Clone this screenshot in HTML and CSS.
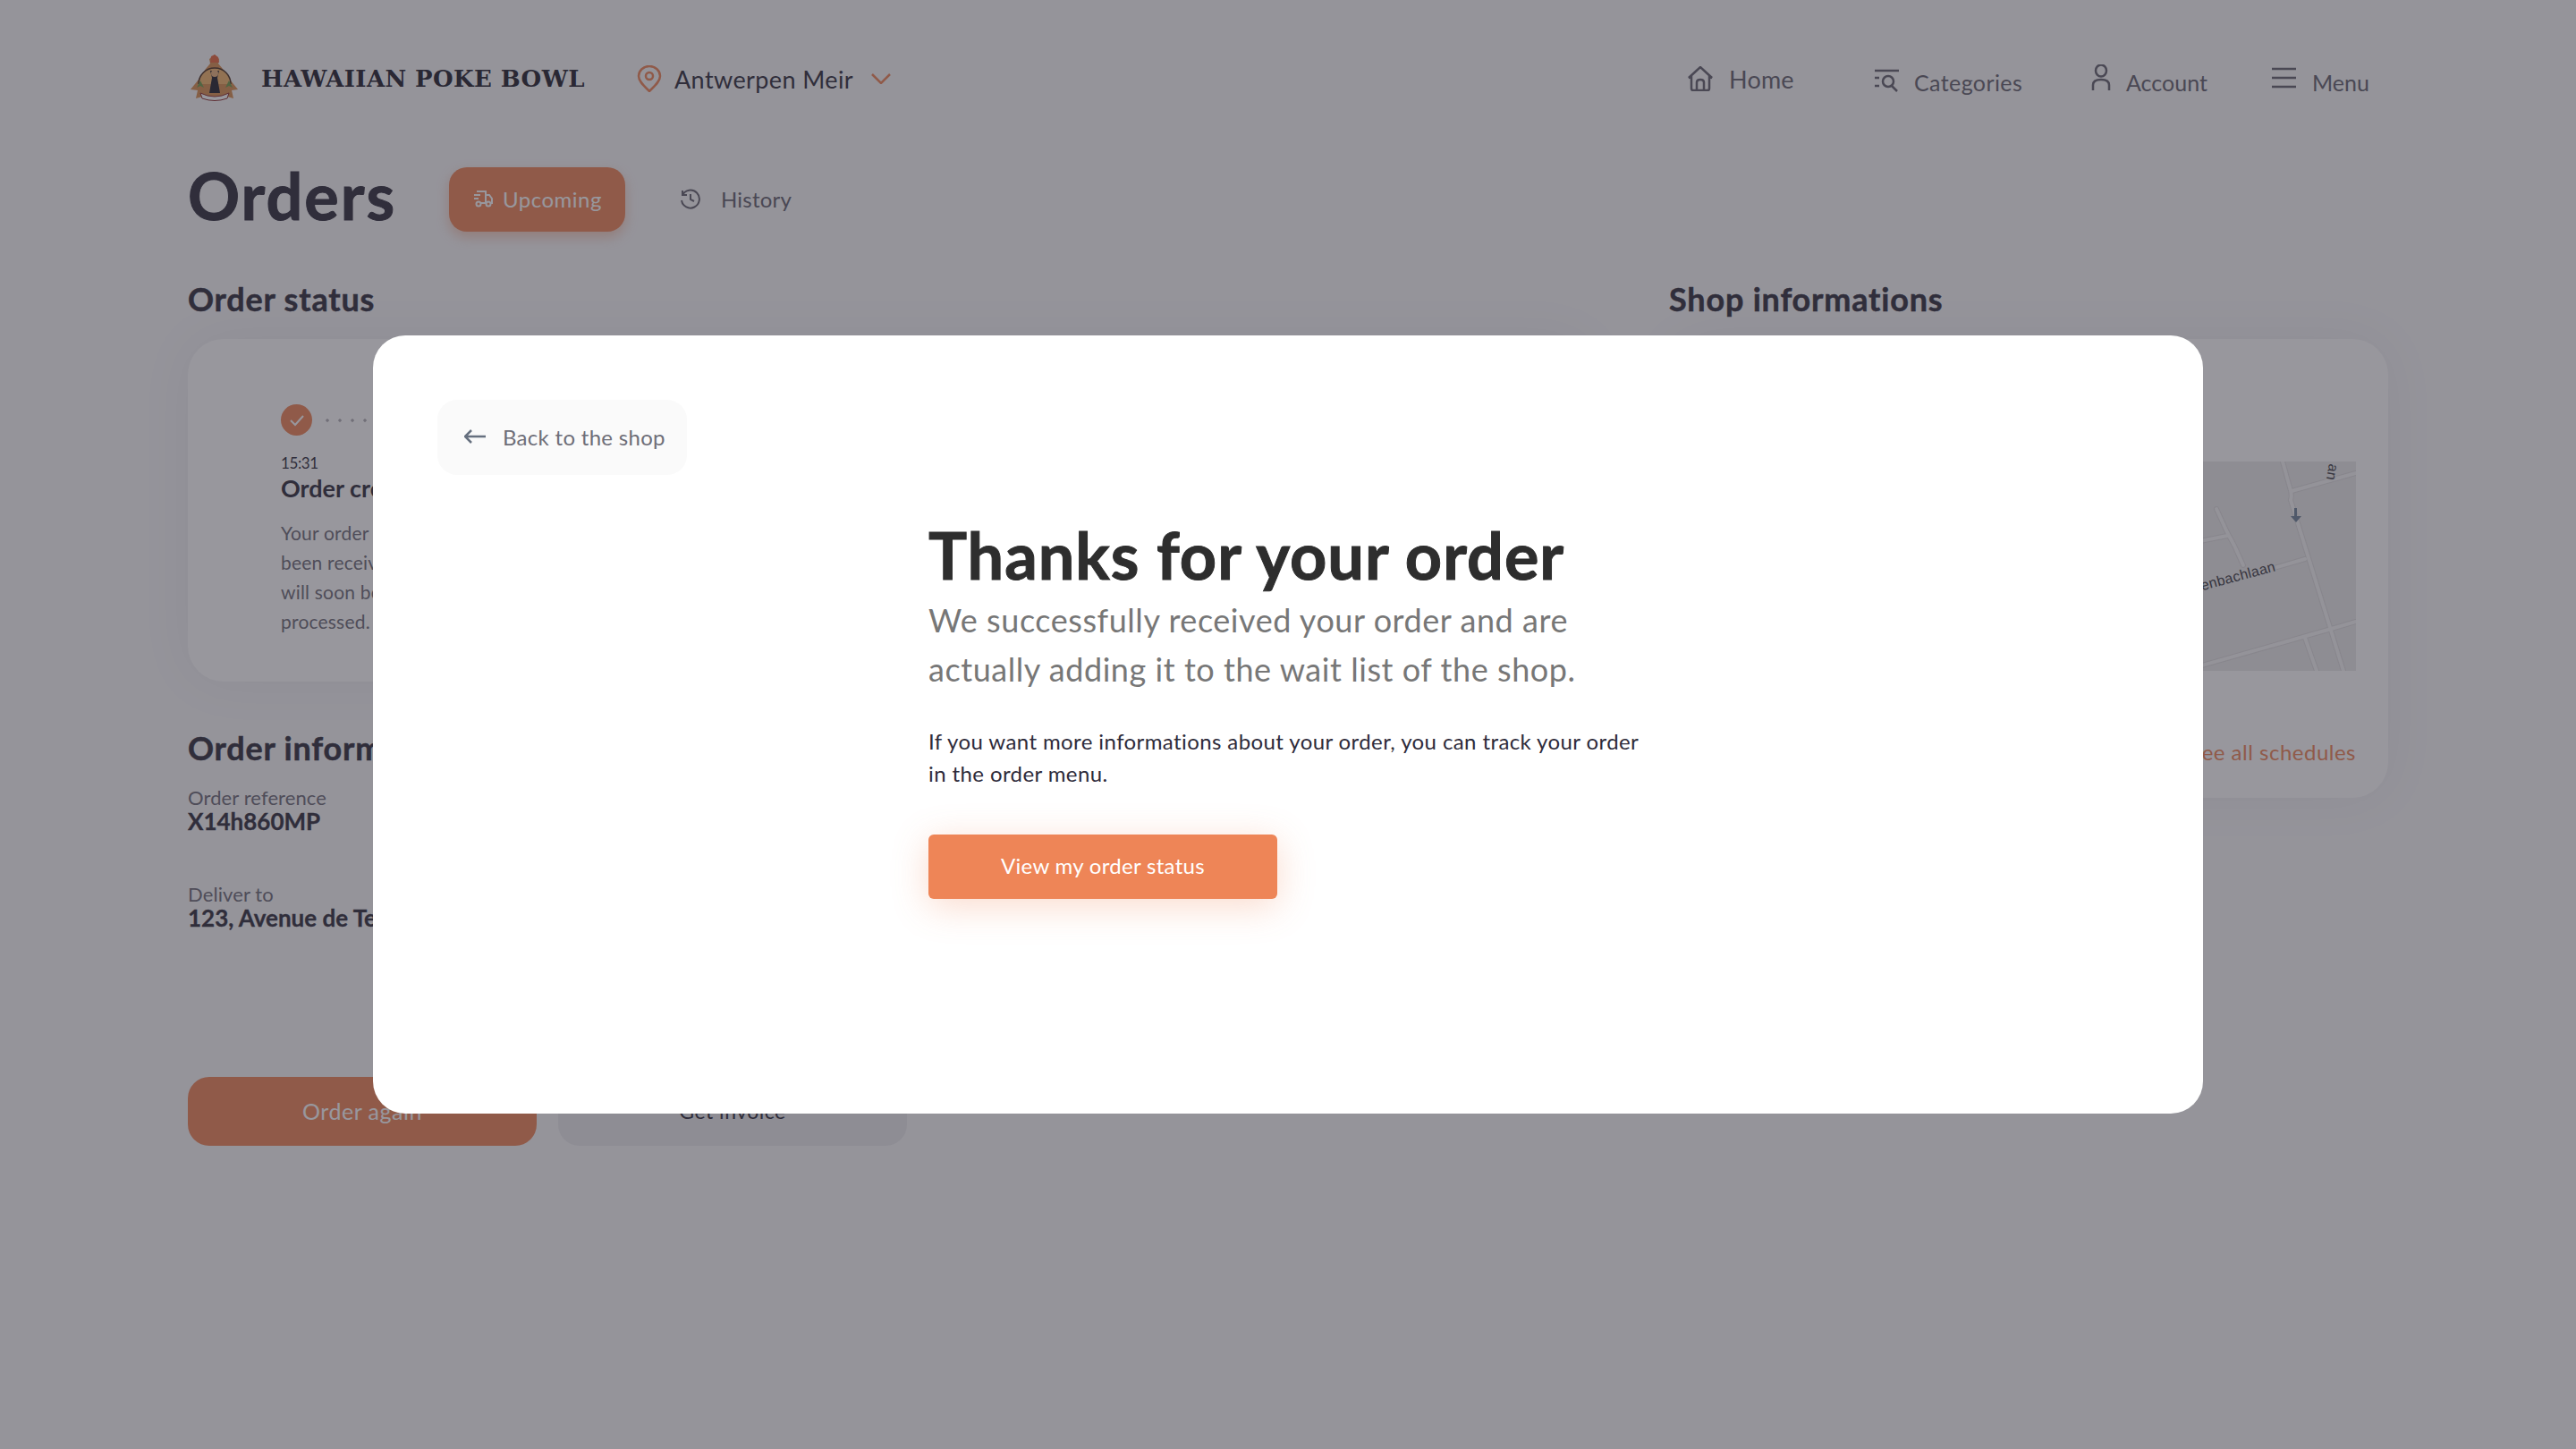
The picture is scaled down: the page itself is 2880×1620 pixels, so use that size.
FILE: index.html
```html
<!DOCTYPE html>
<html lang="en">

<head>
    <meta charset="UTF-8">
    <meta name="viewport" content="width=device-width, initial-scale=1.0">
    <title>Orders - Hawaiian Poke Bowl</title>
    <link rel="stylesheet" href="styles.css">
</head>

<body>
    <div class="page">
        <!-- header -->
        <header class="header">
            <div class="brand">
                <svg class="logo" viewBox="0 0 60 56">
                    <path d="M30 1l5 5-1 5 5 6 8 12 9 11-7 1 2 9-11-3-10 6-10-6-11 3 2-9-8-1 9-11 8-12 5-6-1-5z" fill="#d98f4e"/>
                    <path d="M26 3l4-2 4 3 1 6h-10z" fill="#e8663c"/>
                    <path d="M12 34a18 18 0 0 1 36 0" fill="#f3b56b" stroke="#4a3020" stroke-width="1.5"/>
                    <path d="M25 19h10l-2 8 3 17H24l3-17z" fill="#20202a"/>
                    <circle cx="30" cy="22" r="4" fill="#e8b27c"/>
                    <path d="M10 38l4-8 4 8-4-2zM42 38l4-8 4 8-4-2z" fill="#6e9a4a"/>
                    <path d="M14 44q16 8 32 0l-2 6q-14 5-28 0z" fill="#fff" stroke="#8c2f2f"/>
                </svg>
                <span class="brand-name">Hawaiian Poke Bowl</span>
            </div>
            <div class="location">
                <svg class="location-pin" viewBox="0 0 28 30" fill="none">
                    <path d="M14 29C8 23 2 18 2 12a12 11 0 0 1 24 0c0 6-6 11-12 17z"/>
                    <circle cx="14" cy="12" r="4"/>
                </svg>
                <span class="location-name">Antwerpen Meir</span>
                <svg class="location-arrow" viewBox="0 0 22 12" fill="none">
                    <path d="M1 1l10 10L21 1"/>
                </svg>
            </div>
            <nav class="nav">
                <a class="nav-item nav-home">
                    <svg class="nav-icon" viewBox="0 0 28 28" fill="none">
                        <path d="M1 13L14 1l13 12-3-1v13q0 2-2 2H6q-2 0-2-2V12z"/>
                        <path d="M10 27v-9q0-3 4-3t4 3v9"/>
                    </svg>
                    <span>Home</span>
                </a>
                <a class="nav-item nav-categories">
                    <svg class="nav-icon" viewBox="0 0 28 28" fill="none">
                        <path d="M0 4h27M0 12h5M0 21h5"/>
                        <circle cx="15" cy="16" r="6"/>
                        <path d="M19 21l6 6"/>
                    </svg>
                    <span>Categories</span>
                </a>
                <a class="nav-item nav-account">
                    <svg class="nav-icon" viewBox="0 0 22 30" fill="none">
                        <ellipse cx="11" cy="7" rx="6" ry="6.500"/>
                        <path d="M2 29v-6q0-6 9-6t9 6v6"/>
                    </svg>
                    <span>Account</span>
                </a>
                <a class="nav-item nav-menu">
                    <svg class="nav-icon" viewBox="0 0 28 24" fill="none">
                        <path d="M0 2h27M0 12h27M0 22h27"/>
                    </svg>
                    <span>Menu</span>
                </a>
            </nav>
        </header>

        <!-- title + tabs -->
        <div class="title-row">
            <h1 class="page-title">Orders</h1>
            <div class="tab tab-active">
                <svg class="tab-icon" viewBox="0 0 24 20" fill="none">
                    <path d="M5 2h10v13H10M2 6h7M2 10h5M15 6h4l3 4v5h-2"/>
                    <circle cx="7" cy="16" r="2.500"/>
                    <circle cx="18" cy="16" r="2.500"/>
                </svg>
                <span>Upcoming</span>
            </div>
            <div class="tab tab-history">
                <svg class="tab-icon" viewBox="0 0 24 24" fill="none">
                    <path d="M3 8a10 10 0 1 1-1 6M3 3v5h5M12 7v6l4 2"/>
                </svg>
                <span>History</span>
            </div>
        </div>

        <main class="columns">
            <section class="col-left">
                <h2 class="section-title">Order status</h2>
                <div class="card status-card">
                    <div class="step-head">
                        <span class="step-check">
                            <svg viewBox="0 0 18 14" fill="none"><path d="M2 7l5 5 9-10"/></svg>
                        </span>
                        <span class="step-dots"></span>
                    </div>
                    <div class="step-time">15:31</div>
                    <div class="step-title">Order created</div>
                    <p class="step-text">Your order has<br>been received and<br>will soon be<br>processed.</p>
                </div>

                <h2 class="section-title info-title">Order informations</h2>
                <div class="info-label">Order reference</div>
                <div class="info-value">X14h860MP</div>
                <div class="info-label info-gap">Deliver to</div>
                <div class="info-value">123, Avenue de Tervuren</div>

                <div class="actions">
                    <a class="action action-primary">Order again</a>
                    <a class="action action-grey">Get invoice</a>
                </div>
            </section>

            <section class="col-right">
                <h2 class="section-title">Shop informations</h2>
                <div class="card shop-card">
                    <svg class="map" viewBox="0 0 400 234">
                        <rect width="400" height="234" fill="#ebeaea"/>
                        <g class="map-road map-road-edge">
                            <path d="M318 0l8 29q3 8 1 14l59 191"/>
                            <path d="M328 33l72-20"/>
                            <path d="M244 53l12 26 8 15 10 22"/>
                            <path d="M150 104l106-21"/>
                            <path d="M150 165l193-56"/>
                            <path d="M150 250l219-62 31-9"/>
                            <path d="M343 197l13 37"/>
                        </g>
                        <g class="map-road">
                            <path d="M318 0l8 29q3 8 1 14l59 191"/>
                            <path d="M328 33l72-20"/>
                            <path d="M244 53l12 26 8 15 10 22"/>
                            <path d="M150 104l106-21"/>
                            <path d="M150 165l193-56"/>
                            <path d="M150 250l219-62 31-9"/>
                            <path d="M343 197l13 37"/>
                        </g>
                        <path class="map-arrow" d="M331 52h3v9h5l-6 7-6-7h4z"/>
                        <text class="map-label" text-anchor="end" transform="translate(311 122) rotate(-15)">Rodenbachlaan</text>
                        <text class="map-label" transform="translate(370 2) rotate(100)">an</text>
                    </svg>
                    <a class="schedules">See all schedules</a>
                </div>
            </section>
        </main>
    </div>

    <!-- modal -->
    <div class="overlay">
        <div class="modal">
            <a class="back">
                <svg class="back-icon" viewBox="0 0 24 16" fill="none"><path d="M24 8H2M8 1L1 8l7 7"/></svg>
                <span>Back to the shop</span>
            </a>
            <div class="thanks">
                <h1 class="thanks-title">Thanks for your order</h1>
                <p class="thanks-sub">We successfully received your order and are<br>actually adding it to the wait list of the shop.</p>
                <p class="thanks-text">If you want more informations about your order, you can track your order<br>in the order menu.</p>
                <a class="thanks-button">View my order status</a>
            </div>
        </div>
    </div>
</body>

</html>
```

FILE: styles.css
```css
* {
    box-sizing: border-box;
}

body,
html {
    margin: 0;
    padding: 0;
    width: 100%;
    height: 100%;
    overflow: hidden;
}

body {
    background-color: #f8f8f9;
    color: #2e2c3a;
    font-family: Lato, "Noto Sans", sans-serif;
}

h1,
h2,
p {
    margin: 0;
}

.page {
    width: 2880px;
    height: 1620px;
    padding: 60px 210px 0;
}

/* header */
.header {
    display: flex;
    align-items: center;
    height: 56px;
}

.brand {
    display: flex;
    align-items: center;
    gap: 22px;
}

.logo {
    width: 60px;
    height: 56px;
}

.brand-name {
    width: 365px;
    font-family: "DejaVu Serif", serif;
    font-size: 26px;
    font-weight: 700;
    letter-spacing: 0.4px;
    text-transform: uppercase;
    white-space: nowrap;
    color: #22202c;
}

.location {
    display: flex;
    align-items: center;
    margin-left: 55px;
}

.location-pin {
    width: 28px;
    height: 30px;
    stroke: #ee8557;
    stroke-width: 2.500;
}

.location-name {
    margin-left: 14px;
    font-size: 27px;
    letter-spacing: 0.4px;
}

.location-arrow {
    width: 22px;
    height: 12px;
    margin-left: 20px;
    stroke: #ee8557;
    stroke-width: 2.500;
}

.nav {
    display: flex;
    margin-left: auto;
}

.nav-item {
    display: flex;
    align-items: center;
    gap: 16px;
    font-size: 25px;
    letter-spacing: 0.4px;
    color: #63616c;
}

.nav-icon {
    width: 28px;
    height: 28px;
    stroke: #63616c;
    stroke-width: 2.500;
    flex: none;
}

.nav-home {
    width: 209px;
    font-size: 27px;
    letter-spacing: 0.2px;
    gap: 18px;
}

.nav-categories {
    width: 244px;
    padding-top: 8px;
}

.nav-categories .nav-icon {
    margin-top: -6px;
}

.nav-account {
    width: 200px;
    padding-top: 8px;
    gap: 13px;
    letter-spacing: 0;
}

.nav-account .nav-icon {
    width: 22px;
    height: 30px;
    margin: -10px 4px 0 -2px;
}

.nav-menu {
    width: 130px;
    padding-top: 8px;
    gap: 17px;
    letter-spacing: 0;
}

.nav-menu .nav-icon {
    height: 24px;
    margin-top: -10px;
}

/* title */
.title-row {
    display: flex;
    align-items: center;
    height: 72px;
    margin-top: 71px;
}

.page-title {
    width: 292px;
    padding-bottom: 10px;
    font-size: 72px;
    font-weight: 700;
    line-height: 72px;
    letter-spacing: 2px;
    -webkit-text-stroke: 1px #2e2c3a;
    color: #2e2c3a;
}

.tab {
    display: flex;
    align-items: center;
    gap: 10px;
    height: 72px;
    padding-bottom: 2px;
    font-size: 24px;
    letter-spacing: 0.5px;
    color: #63616c;
}

.tab-active {
    width: 197px;
    padding-left: 26px;
    margin-right: 61px;
    border-radius: 20px;
    background-color: #ee8557;
    color: #fff;
    box-shadow: 0 6px 14px rgba(238, 133, 87, 0.4);
}

.tab-icon {
    width: 24px;
    height: 24px;
    stroke: currentColor;
    stroke-width: 2;
    flex: none;
}

.tab-history {
    gap: 22px;
    letter-spacing: 0.2px;
}

/* columns */
.columns {
    display: grid;
    grid-template-columns: 1656px 804px;
    margin-top: 50px;
}

.section-title {
    font-size: 36px;
    font-weight: 700;
    line-height: 50px;
    letter-spacing: 0.8px;
    -webkit-text-stroke: 0.5px #2e2c3a;
    color: #2e2c3a;
}

.card {
    margin-top: 20px;
    border-radius: 40px;
    background-color: #fff;
    box-shadow: 0 0 60px rgba(40, 40, 60, 0.06);
}

.status-card {
    width: 1570px;
    height: 383px;
    padding: 73px 0 0 104px;
}

.step-head {
    display: flex;
    align-items: center;
    gap: 10px;
}

.step-check {
    display: flex;
    align-items: center;
    justify-content: center;
    width: 35px;
    height: 35px;
    border-radius: 50%;
    background-color: #ee8557;
}

.step-check svg {
    width: 18px;
    height: 14px;
    stroke: #fff;
    stroke-width: 2;
}

.step-dots {
    width: 300px;
    height: 4px;
    background-image: radial-gradient(circle, #b0afb5 1.4px, transparent 2px);
    background-size: 14px 4px;
}

.step-time {
    margin-top: 20px;
    font-size: 17px;
    line-height: 22px;
    letter-spacing: -0.4px;
}

.step-title {
    font-size: 27px;
    font-weight: 700;
    line-height: 34px;
}

.step-text {
    margin-top: 16px;
    font-size: 21px;
    line-height: 33px;
    letter-spacing: 0.2px;
    color: #6d6b76;
}

.info-title {
    margin-top: 49px;
}

.info-label {
    margin-top: 17px;
    font-size: 22px;
    line-height: 27px;
    letter-spacing: 0.1px;
    color: #6d6b76;
}

.info-gap {
    margin-top: 55px;
}

.info-value {
    font-size: 26px;
    font-weight: 700;
    line-height: 26px;
    -webkit-text-stroke: 0.3px #2e2c3a;
}

.actions {
    display: flex;
    gap: 24px;
    margin-top: 165px;
}

.action {
    display: flex;
    align-items: center;
    justify-content: center;
    width: 390px;
    height: 77px;
    padding-bottom: 2px;
    border-radius: 24px;
    font-size: 25px;
    letter-spacing: 0.5px;
}

.action-primary {
    background-color: #ee8557;
    color: #fff;
}

.action-grey {
    background-color: #eaeaec;
    font-size: 23px;
    color: #2e2c3a;
}

.shop-card {
    display: flex;
    flex-direction: column;
    height: 513px;
    padding: 137px 36px 0;
}

.map {
    display: block;
    width: 400px;
    height: 234px;
    margin-left: auto;
}

.map-road {
    fill: none;
    stroke: #f6f6f6;
    stroke-width: 4;
    stroke-linecap: round;
}

.map-road-edge {
    stroke: #dddcdd;
    stroke-width: 6;
}

.map-arrow {
    fill: #6f8299;
}

.map-label {
    font-family: "Liberation Sans", sans-serif;
    font-size: 16px;
    letter-spacing: 0.3px;
    fill: #3c3c44;
    stroke: #ebeaea;
    stroke-width: 3px;
    paint-order: stroke;
}

.schedules {
    align-self: flex-end;
    margin-top: 76px;
    font-size: 24px;
    line-height: 30px;
    letter-spacing: 0.5px;
    color: #ee8557;
}

/* modal */
.overlay {
    position: fixed;
    top: 0;
    left: 0;
    display: flex;
    align-items: center;
    justify-content: center;
    width: 100%;
    height: 100%;
    background-color: rgba(50, 48, 60, 0.5);
}

.modal {
    width: 2046px;
    height: 870px;
    padding: 72px;
    border-radius: 36px;
    background-color: #fff;
}

.back {
    display: inline-flex;
    align-items: center;
    gap: 19px;
    width: 279px;
    height: 84px;
    padding-left: 30px;
    padding-bottom: 2px;
    border-radius: 22px;
    background-color: #fafafa;
    font-size: 24px;
    letter-spacing: 0.3px;
    color: #6e6e78;
}

.back-icon {
    width: 24px;
    height: 16px;
    stroke: #66707f;
    stroke-width: 2.500;
}

.thanks {
    margin: 49px 0 0 549px;
}

.thanks-title {
    font-size: 72px;
    font-weight: 700;
    line-height: 80px;
    letter-spacing: 1px;
    -webkit-text-stroke: 1px #2e2e2e;
    color: #2e2e2e;
}

.thanks-sub {
    margin-top: 6px;
    font-size: 36px;
    line-height: 55px;
    letter-spacing: 0.55px;
    color: #777;
}

.thanks-text {
    margin-top: 35px;
    font-size: 24px;
    line-height: 36px;
    letter-spacing: 0.4px;
    color: #2e2b3a;
}

.thanks-button {
    display: flex;
    align-items: center;
    justify-content: center;
    width: 390px;
    height: 72px;
    margin-top: 50px;
    padding-bottom: 3px;
    border-radius: 6px;
    background-color: #ee8557;
    font-size: 24px;
    letter-spacing: 0.3px;
    color: #fff;
    box-shadow: 0 8px 40px rgba(238, 133, 87, 0.3);
}
```
